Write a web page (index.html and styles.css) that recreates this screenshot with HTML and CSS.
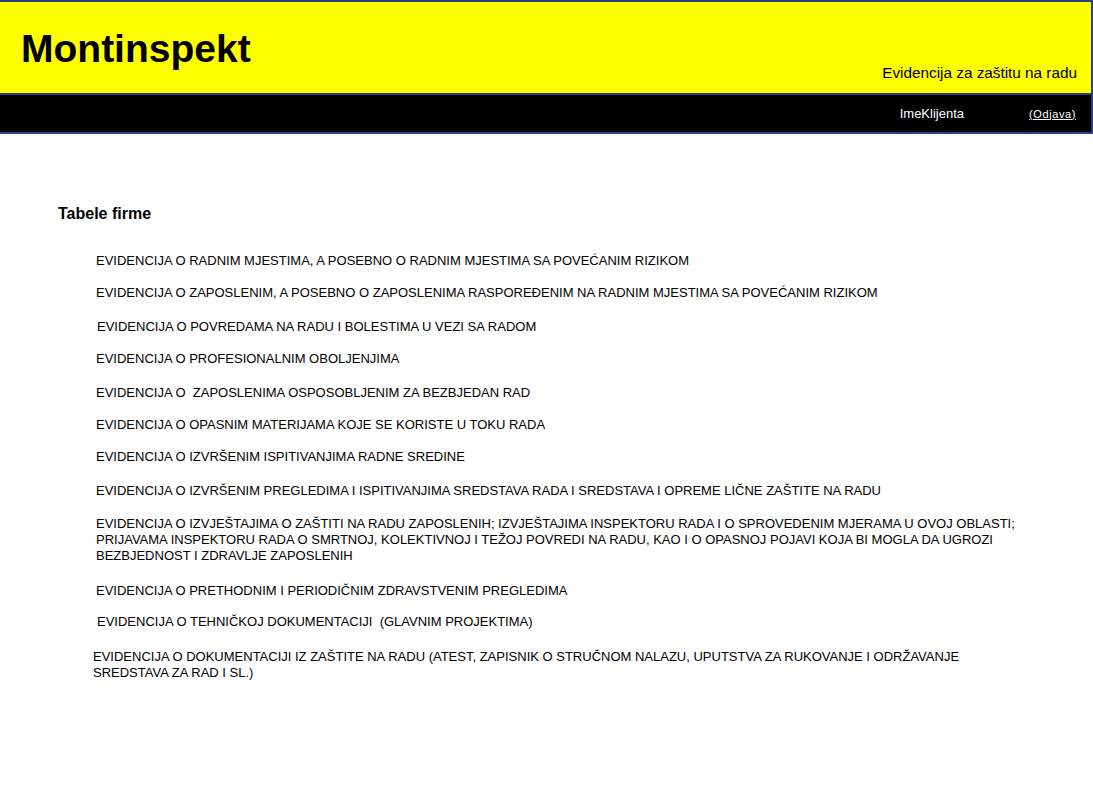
FILE: index.html
```html
<!DOCTYPE html>
<html lang="sr">
<head>
<meta charset="utf-8">
<title>Montinspekt</title>
<link rel="stylesheet" href="styles.css">
</head>
<body>
<header class="header">
  <div class="brand-bar">
    <h1 class="brand">Montinspekt</h1>
    <div class="tagline">Evidencija za zaštitu na radu</div>
  </div>
  <div class="user-bar">
    <span class="client">ImeKlijenta</span>
    <a class="logout" href="#">(Odjava)</a>
  </div>
</header>
<main class="content">
  <h2 class="section-title">Tabele firme</h2>
  <ul class="tables">
    <li class="item">EVIDENCIJA O RADNIM MJESTIMA, A POSEBNO O RADNIM MJESTIMA SA POVEĆANIM RIZIKOM</li>
    <li class="item">EVIDENCIJA O ZAPOSLENIM, A POSEBNO O ZAPOSLENIMA RASPOREĐENIM NA RADNIM MJESTIMA SA POVEĆANIM RIZIKOM</li>
    <li class="item gap-2 shift-r">EVIDENCIJA O POVREDAMA NA RADU I BOLESTIMA U VEZI SA RADOM</li>
    <li class="item">EVIDENCIJA O PROFESIONALNIM OBOLJENJIMA</li>
    <li class="item gap-2">EVIDENCIJA O &nbsp;ZAPOSLENIMA OSPOSOBLJENIM ZA BEZBJEDAN RAD</li>
    <li class="item">EVIDENCIJA O OPASNIM MATERIJAMA KOJE SE KORISTE U TOKU RADA</li>
    <li class="item">EVIDENCIJA O IZVRŠENIM ISPITIVANJIMA RADNE SREDINE</li>
    <li class="item gap-2">EVIDENCIJA O IZVRŠENIM PREGLEDIMA I ISPITIVANJIMA SREDSTAVA RADA I SREDSTAVA I OPREME LIČNE ZAŠTITE NA RADU</li>
    <li class="item gap-1">EVIDENCIJA O IZVJEŠTAJIMA O ZAŠTITI NA RADU ZAPOSLENIH; IZVJEŠTAJIMA INSPEKTORU RADA I O SPROVEDENIM MJERAMA U OVOJ OBLASTI; PRIJAVAMA INSPEKTORU RADA O SMRTNOJ, KOLEKTIVNOJ I TEŽOJ POVREDI NA RADU, KAO I O OPASNOJ POJAVI KOJA BI MOGLA DA UGROZI BEZBJEDNOST I ZDRAVLJE ZAPOSLENIH</li>
    <li class="item gap-3">EVIDENCIJA O PRETHODNIM I PERIODIČNIM ZDRAVSTVENIM PREGLEDIMA</li>
    <li class="item gap-less shift-r">EVIDENCIJA O TEHNIČKOJ DOKUMENTACIJI &nbsp;(GLAVNIM PROJEKTIMA)</li>
    <li class="item gap-3 shift-l">EVIDENCIJA O DOKUMENTACIJI IZ ZAŠTITE NA RADU (ATEST, ZAPISNIK O STRUČNOM NALAZU, UPUTSTVA ZA RUKOVANJE I ODRŽAVANJE SREDSTAVA ZA RAD I SL.)</li>
  </ul>
</main>
</body>
</html>
```
FILE: styles.css
```css
html, body {
  margin: 0;
  padding: 0;
  background: #ffffff;
  font-family: "Liberation Sans", Arial, sans-serif;
  color: #000000;
}

.header {
  border-top: 2px solid #263f86;
  border-right: 2px solid #263f86;
}

.brand-bar {
  background: #ffff00;
  height: 91px;
  border-bottom: 2px solid #263f86;
  display: flex;
  justify-content: space-between;
  align-items: flex-end;
  padding: 0 14px 0 21px;
}

.brand {
  margin: 0;
  align-self: flex-start;
  padding-top: 24px;
  font-size: 39px;
  line-height: 46px;
  font-weight: bold;
}

.tagline {
  font-size: 15.3px;
  line-height: 18px;
  padding-bottom: 11px;
}

.user-bar {
  background: #000000;
  height: 37px;
  border-bottom: 2px solid #263f86;
  display: flex;
  align-items: center;
  justify-content: flex-end;
  padding-right: 15px;
  font-size: 13px;
}

.client {
  color: #ffffff;
  margin-right: 65px;
}

.logout {
  color: #ffffff;
  font-size: 11px;
  letter-spacing: 0.6px;
  text-decoration: underline;
}

.content {
  padding: 70px 0 0 58px;
}

.section-title {
  margin: 0;
  font-size: 16px;
  line-height: 20px;
  font-weight: bold;
}

.tables {
  list-style: none;
  margin: 0;
  padding: 29px 73px 0 38px;
}

.item {
  font-size: 13px;
  line-height: 16px;
  margin-bottom: 16px;
}

.gap-1 {
  padding-top: 1px;
}

.gap-2 {
  padding-top: 2px;
}

.gap-3 {
  padding-top: 3px;
}

.gap-less {
  margin-top: -1px;
}

.shift-r {
  padding-left: 1px;
}

.shift-l {
  margin-left: -3px;
}
```
